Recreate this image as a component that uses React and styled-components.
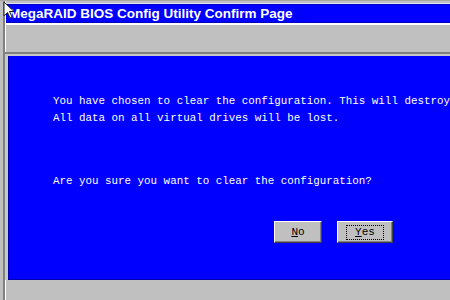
import React from "react";
import styled, { createGlobalStyle } from "styled-components";

const GlobalStyle = createGlobalStyle`
  html, body { margin: 0; padding: 0; background: #c0c0c0; overflow: hidden; }
  #root { width: 450px; height: 300px; }
`;

const Screen = styled.div`
  position: relative;
  width: 450px;
  height: 300px;
  background: #c0c0c0;
  display: flex;
  flex-direction: column;
  overflow: hidden;
  border-top: 1px solid #a8a8a8;
  box-sizing: border-box;
`;

const Frame = styled.div`
  flex: 1;
  margin-left: 3px;
  border-left: 2px solid #808080;
  box-shadow: inset 1px 0 0 #ffffff;
  display: flex;
  flex-direction: column;
  min-width: 0;
`;

const TitleBar = styled.div`
  margin: 2px 0 0 1px;
  height: 19px;
  background: #0000ff;
  border-top: 1px solid #e0e0ff;
  border-bottom: 2px solid #ffffff;
  box-shadow: inset 0 1px 0 #0000c0, inset 0 -1px 0 #0000c0;
  display: flex;
  align-items: center;
  padding-left: 3px;
  color: #ffffff;
  font-family: "Liberation Sans", Arial, sans-serif;
  font-weight: bold;
  font-size: 13.5px;
  white-space: nowrap;
`;

const Spacer = styled.div`
  height: 27px;
`;

const Well = styled.div`
  border-top: 2px solid #808080;
  padding-top: 2px;
  background: #c8c8c8;
  display: flex;
  flex-direction: column;
`;

const Panel = styled.div`
  margin-left: 3px;
  width: 460px;
  height: 224px;
  background: #0000ff;
  border-left: 1px solid #0000b0;
  border-bottom: 1px solid #0000b0;
  box-sizing: border-box;
  padding: 37px 0 0 44px;
  display: flex;
  flex-direction: column;
  font-family: "Liberation Mono", "DejaVu Sans Mono", monospace;
  font-size: 10.85px;
  line-height: 17px;
  color: #ffffff;
`;

const Line = styled.div`
  white-space: nowrap;
  margin-top: ${(p) => p.$gap || 0}px;
`;

const ButtonRow = styled.div`
  display: flex;
  gap: 15px;
  margin-top: 31px;
  padding-left: 221px;
`;

const Button = styled.div`
  width: ${(p) => p.$w}px;
  height: 22px;
  box-sizing: border-box;
  background: #c0c0c0;
  border-top: 1px solid #ffffff;
  border-left: 1px solid #ffffff;
  border-right: 1px solid #404040;
  border-bottom: 1px solid #404040;
  box-shadow: inset -1px -1px 0 #808080;
  display: flex;
  align-items: center;
  justify-content: center;
  color: #000000;
  font-family: "Liberation Mono", "DejaVu Sans Mono", monospace;
  font-size: 11px;
  line-height: 13px;
`;

const Focus = styled.span`
  display: flex;
  align-items: center;
  justify-content: center;
  width: 38px;
  height: 15px;
  box-sizing: border-box;
  border: 1px dotted #000000;
`;

const Key = styled.span`
  text-decoration: underline;
`;

const Cursor = styled.svg`
  position: absolute;
  left: 3px;
  top: 0px;
`;

export default function App() {
  return (
    <>
      <GlobalStyle />
      <Screen>
        <Frame>
          <TitleBar>MegaRAID BIOS Config Utility Confirm Page</TitleBar>
          <Spacer />
          <Well>
            <Panel>
              <Line>You have chosen to clear the configuration. This will destroy</Line>
              <Line>All data on all virtual drives will be lost.</Line>
              <Line $gap={46}>Are you sure you want to clear the configuration?</Line>
              <ButtonRow>
                <Button $w={48}>
                  <span><Key>N</Key>o</span>
                </Button>
                <Button $w={56}>
                  <Focus>
                    <span><Key>Y</Key>es</span>
                  </Focus>
                </Button>
              </ButtonRow>
            </Panel>
          </Well>
        </Frame>
        <Cursor width="12" height="18" viewBox="0 0 12 18">
          <path d="M1 1 L1 15 L4.5 11.5 L7 17 L9 16 L6.5 10.5 L11 10.5 Z" fill="#ffffff" stroke="#202020" strokeWidth="1" />
        </Cursor>
      </Screen>
    </>
  );
}
